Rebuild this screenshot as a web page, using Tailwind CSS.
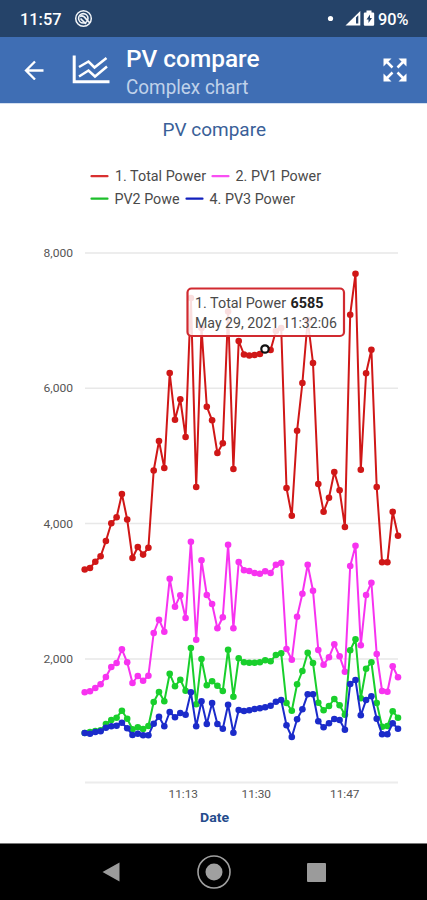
<!DOCTYPE html>
<html lang="en">
<head>
<meta charset="utf-8">
<meta name="viewport" content="width=device-width, initial-scale=1">
<title>PV compare</title>
<script src="https://cdn.jsdelivr.net/npm/@tailwindcss/browser@4"></script>
</head>
<body class="flex h-[900px] w-[427px] flex-col overflow-hidden bg-white font-[Roboto,sans-serif]">

<!-- Status bar -->
<div class="flex h-[37px] shrink-0 items-center bg-[#254369] pl-5 pr-[18px] text-white">
  <svg class="block" width="43" height="18"><text x="0" y="15" fill="#fff" font-size="17" font-weight="500" textLength="41.5" lengthAdjust="spacingAndGlyphs">11:57</text></svg>
  <svg class="ml-[11px]" width="19" height="19" viewBox="0 0 19 19" fill="none" stroke="#f2f5f8">
    <circle cx="9.5" cy="9.5" r="7.8" stroke-width="1.5"/>
    <circle cx="9.3" cy="9.3" r="4.7" stroke-width="1.6"/>
    <path d="M6 7.5Q9 5.5 12.5 10.5L16 14M6.5 9.5L12 15" stroke-width="1.7"/>
  </svg>
  <svg class="ml-auto" width="49" height="20" viewBox="0 0 49 20">
    <circle cx="3.500" cy="9.500" r="2.600" fill="#fff"/>
    <path d="M18.500 16.500L33.300 2V16.500Z" fill="#fff"/>
    <path d="M29 8.500L31.300 6.200V14.500H29Z" fill="#254369"/>
    <path d="M38 3.500H39.500V1.500H44.500V3.500H46Q47.200 3.500 47.200 4.500V15.500Q47.200 16.700 46 16.700H38Q36.800 16.700 36.800 15.500V4.500Q36.800 3.500 38 3.500Z" fill="#fff"/>
    <path d="M43 5.500L39.500 10.500H41.500V14L45 9H43Z" fill="#254369"/>
  </svg>
  <svg class="ml-[2px]" width="31" height="18"><text x="0" y="15" fill="#fff" font-size="17" font-weight="500" textLength="30.500" lengthAdjust="spacingAndGlyphs">90%</text></svg>
</div>

<!-- App bar -->
<header class="flex h-[66px] shrink-0 items-center bg-[#3f6eb4] pl-6 pr-5 text-white">
  <svg width="20" height="20" viewBox="0 0 20 20" fill="none" stroke="#fff" stroke-width="2.300"><path d="M19.500 10.500H2M11 1.500L2 10.500L11 19.500"/></svg>
  <svg class="ml-[28px]" width="38" height="30" viewBox="0 0 38 30" fill="none" stroke="#fff">
    <path d="M2.200 .5V26.800H37.500" stroke-width="3"/>
    <path d="M7 12L16.500 6.500L22.500 12.500L34.500 3M7 21.500L16.500 15.500L23 21.500L35 11.500" stroke-width="2.500"/>
  </svg>
  <svg class="ml-4" width="150" height="66">
    <text x="0" y="30" fill="#fff" font-size="24" font-weight="500" textLength="133.500" lengthAdjust="spacingAndGlyphs">PV compare</text>
    <text x="0" y="57" fill="#c0d2ea" font-size="20" textLength="122.500" lengthAdjust="spacingAndGlyphs">Complex chart</text>
  </svg>
  <svg class="ml-auto" width="24" height="24" viewBox="0 0 24 24" fill="#fff" stroke="#fff" stroke-width="2.500">
    <path d="M.5.500H8.500L.5 8.500ZM15.500.500H23.500V8.500ZM.5 15.500V23.500H8.500ZM23.500 15.500V23.500H15.500Z" stroke="none"/>
    <path d="M3 3L9.500 9.500M21 3L14.500 9.500M3 21L9.500 14.500M21 21L14.500 14.500" fill="none"/>
  </svg>
</header>

<!-- Chart -->
<main class="h-[740px] shrink-0 bg-white">
<svg class="block" width="427" height="740" viewBox="0 103 427 740">
  <defs>
    <marker id="dotR" markerUnits="userSpaceOnUse" markerWidth="8" markerHeight="8" refX="4" refY="4"><circle cx="4" cy="4" r="3.300" fill="#d01717"/></marker>
    <marker id="dotM" markerUnits="userSpaceOnUse" markerWidth="8" markerHeight="8" refX="4" refY="4"><circle cx="4" cy="4" r="3.300" fill="#f733f0"/></marker>
    <marker id="dotG" markerUnits="userSpaceOnUse" markerWidth="8" markerHeight="8" refX="4" refY="4"><circle cx="4" cy="4" r="3.300" fill="#19cf2c"/></marker>
    <marker id="dotB" markerUnits="userSpaceOnUse" markerWidth="8" markerHeight="8" refX="4" refY="4"><circle cx="4" cy="4" r="3.300" fill="#1b2bca"/></marker>
  </defs>
  <path d="M0 103.500H427" stroke="#d3dff0"/>
  <text x="162.500" y="135.500" font-size="19" fill="#3a5f98" textLength="103.500" lengthAdjust="spacingAndGlyphs">PV compare</text>

  <!-- Legend -->
  <g stroke-width="2.200" stroke-linecap="round">
    <path d="M91.500 176.200H107.500" stroke="#d93030"/><path d="M212.500 176.200H228.500" stroke="#f94ff3"/>
    <path d="M91.500 198.700H107.500" stroke="#1dbf2b"/><path d="M186.500 198.700H202.500" stroke="#1220bd"/>
  </g>
  <g font-size="14" fill="#4a4a4a">
    <text x="115" y="181.300" textLength="91" lengthAdjust="spacingAndGlyphs">1. Total Power</text>
    <text x="235.500" y="181.300" textLength="85.500" lengthAdjust="spacingAndGlyphs">2. PV1 Power</text>
    <text x="114.500" y="203.800" textLength="65" lengthAdjust="spacingAndGlyphs">PV2 Powe</text>
    <text x="209.500" y="203.800" textLength="85.500" lengthAdjust="spacingAndGlyphs">4. PV3 Power</text>
  </g>

  <!-- Axes -->
  <path d="M85 253H398M85 388.300H398M85 523.500H398M85 659H398" stroke="#e8e8e8" stroke-width="1.500"/>
  <path d="M85 782.500H398" stroke="#ececec" stroke-width="2"/>
  <g font-size="11.500" fill="#555">
    <text x="43.500" y="257" textLength="29.500" lengthAdjust="spacingAndGlyphs">8,000</text>
    <text x="43.500" y="392.300" textLength="29.500" lengthAdjust="spacingAndGlyphs">6,000</text>
    <text x="43.500" y="527.500" textLength="29.500" lengthAdjust="spacingAndGlyphs">4,000</text>
    <text x="43.500" y="663" textLength="29.500" lengthAdjust="spacingAndGlyphs">2,000</text>
    <text x="168.500" y="798.300" textLength="29.500" lengthAdjust="spacingAndGlyphs">11:13</text>
    <text x="241.500" y="798.300" textLength="29.500" lengthAdjust="spacingAndGlyphs">11:30</text>
    <text x="330" y="798.300" textLength="29.500" lengthAdjust="spacingAndGlyphs">11:47</text>
  </g>
  <text x="200" y="821.500" font-size="13.500" font-weight="700" fill="#254c8c" textLength="29" lengthAdjust="spacingAndGlyphs">Date</text>

  <!-- Series -->
  <g id="series" fill="none" stroke-width="2" stroke-linejoin="round"></g>

  <!-- Tooltip -->
  <g>
    <rect x="187.500" y="288.500" width="156.500" height="47.500" rx="4" fill="#fff" fill-opacity=".86" stroke="#d12a30" stroke-width="2.200"/>
    <g font-size="14" fill="#4a4a4a">
      <text x="195" y="308" textLength="91" lengthAdjust="spacingAndGlyphs">1. Total Power</text>
      <text x="290.500" y="308" font-weight="700" fill="#222" textLength="33" lengthAdjust="spacingAndGlyphs">6585</text>
      <text x="195" y="327.500" textLength="142" lengthAdjust="spacingAndGlyphs">May 29, 2021 11:32:06</text>
    </g>
    <circle cx="265" cy="349" r="3.700" fill="#fff" stroke="#111" stroke-width="2.200"/>
  </g>
</svg>
</main>

<!-- Navigation bar -->
<nav class="flex grow items-center justify-between border-t border-[#777] bg-black pl-[101px] pr-[101px]">
  <svg width="20" height="20" viewBox="0 0 20 20"><path d="M1.500 10L18.500 .5V19.500Z" fill="#9b9b9b"/></svg>
  <svg width="36" height="36" viewBox="0 0 36 36"><circle cx="18" cy="18" r="16" fill="none" stroke="#a0a0a0" stroke-width="1.600"/><circle cx="18" cy="18" r="8.500" fill="#a0a0a0"/></svg>
  <div class="size-[19px] rounded-[1px] bg-[#9b9b9b]"></div>
</nav>

<script>
const series = [
  { color: '#d01717', dot: 'dotR', y: [569.5,568,561.7,556.3,541,523.3,517.3,494,519.5,558,547,554.6,547.7,470.5,441,468,373,419.7,399.3,437,298,487,328,406.7,420.3,453,443.3,311.5,469,341,354.5,355.5,355,354,349,350,331,328,488,515.7,430.7,383,320,363,484,511.7,497.7,472,490.3,527,314.7,273.7,469.7,373.3,349.7,487,562.3,562.3,511.7,535.7] },
  { color: '#f733f0', dot: 'dotM', y: [692.3,691.3,688,684.3,677,667,663,649.3,662.3,683,676,680.7,675.7,633,619.7,631.7,578.7,606.7,595.3,618,541.7,639.7,560.3,595,604,628.3,617.3,544.7,628.3,562,570.3,571,573,573.7,571.3,573,564.7,563,649,659.7,616.7,593.7,564.7,590.7,650,664.7,657.3,644.3,656.3,671.7,566,545.7,645.3,595,582.7,654,691,691.7,666.3,677.3] },
  { color: '#19cf2c', dot: 'dotG', y: [733,732,731,730.3,724,720,717.7,710.7,718.7,729.3,727.3,729,726,702,692,701.3,673.7,686.3,679.7,690.7,648,704.3,659,685.3,681.3,685.7,691,649.7,696.7,658.3,662.3,662.7,662.7,662.3,660.3,661.3,655,653.3,703,710.7,684.3,671,652.7,663,702.7,710.3,706,699,705.3,714.7,650.3,639.3,698.3,668.7,662.3,703,726.7,726,711.3,717.7] },
  { color: '#1b2bca', dot: 'dotB', y: [733,733.7,732,731.3,727.7,726.3,725.7,722.7,728.3,735,733.7,735.3,735.3,723.7,716.7,726.3,712,717.3,713,714.7,692.3,726.3,701.3,724,703,724,728.7,704.7,732.7,710,711,710.3,709,708.3,707.3,705.7,701.7,700,725.3,737,719.3,709.3,694.3,694.3,721.3,727.3,723.3,719,720,729.7,684,680,715.3,700,696.3,718.7,734.3,734.3,723.3,728.7] }
];
const group = document.getElementById('series');
for (const s of series) {
  const line = document.createElementNS('http://www.w3.org/2000/svg', 'polyline');
  line.setAttribute('points', s.y.map((y, i) => (84.7 + i * 5.31).toFixed(1) + ',' + y).join(' '));
  line.setAttribute('stroke', s.color);
  for (const m of ['marker-start', 'marker-mid', 'marker-end']) line.setAttribute(m, `url(#${s.dot})`);
  group.appendChild(line);
}
</script>
</body>
</html>
